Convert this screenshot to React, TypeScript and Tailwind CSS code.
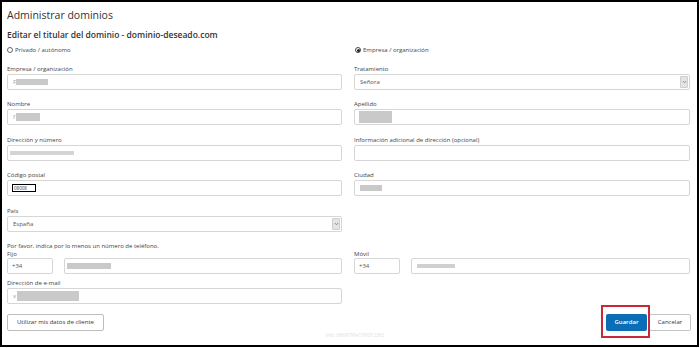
import React from "react";

function Label({ children }: { children?: React.ReactNode }) {
  return <div className="h-[8px] leading-[8px] text-[6px] text-[#444] whitespace-nowrap">{children}</div>;
}

function Box({ children, className = "" }: { children?: React.ReactNode; className?: string }) {
  return (
    <div className={"h-[16px] border border-[#d6d6d6] rounded-[2px] bg-white flex items-center px-[5px] text-[6px] text-[#555] " + className}>
      {children}
    </div>
  );
}

function Redact({ className = "" }: { className?: string }) {
  return <div className={"bg-[#c9c9c9] " + className} />;
}

function SelectBox({ value }: { value: string }) {
  return (
    <div className="h-[16px] border border-[#d6d6d6] rounded-[2px] bg-white flex items-stretch text-[6px] text-[#555]">
      <div className="flex-1 flex items-center pl-[5px]">{value}</div>
      <div className="w-[8px] my-[1px] mr-[1px] bg-[#e4e4e4] border border-[#cfcfcf] rounded-[1px] flex items-center justify-center">
        <svg width="5" height="4" viewBox="0 0 5 4">
          <path d="M0.8 1 L2.5 2.8 L4.2 1" stroke="#777" strokeWidth="0.8" fill="none" />
        </svg>
      </div>
    </div>
  );
}

export default function App() {
  return (
    <div className="w-[699px] h-[347px] border-2 border-black bg-white pl-[5px] pr-[6px] relative font-['Open_Sans',sans-serif]">
      <div className="mt-[6px] h-[14px] leading-[14px] text-[10.5px] text-[#333]">Administrar dominios</div>
      <div className="mt-[7px] h-[12px] leading-[12px] text-[8.5px] font-semibold text-[#333]">
        Editar el titular del dominio - dominio-deseado.com
      </div>

      <div className="grid grid-cols-[335px_336px] gap-x-[12px]">
        {/* radio row */}
        <div className="mt-[4px] h-[10px] flex items-center gap-[2px] text-[6px] text-[#444]">
          <span className="w-[6px] h-[6px] rounded-full border border-[#666] bg-white" />
          <span>Privado / autónomo</span>
        </div>
        <div className="mt-[4px] h-[10px] flex items-center gap-[2px] text-[6px] text-[#444] pl-[1px]">
          <span className="w-[6px] h-[6px] rounded-full border border-[#444] bg-white flex items-center justify-center">
            <span className="w-[3px] h-[3px] rounded-full bg-[#222]" />
          </span>
          <span>Empresa / organización</span>
        </div>

        {/* row 1 */}
        <div className="mt-[10px]">
          <Label>Empresa / organización</Label>
          <div className="mt-[1px]">
            <Box>
              <span className="text-[#999]">F</span>
              <Redact className="w-[32px] h-[6px]" />
            </Box>
          </div>
        </div>
        <div className="mt-[10px]">
          <Label>Tratamiento</Label>
          <div className="mt-[1px]">
            <SelectBox value="Señora" />
          </div>
        </div>

        {/* row 2 */}
        <div className="mt-[10px]">
          <Label>Nombre</Label>
          <div className="mt-[1px]">
            <Box>
              <span className="text-[#999]">f</span>
              <Redact className="w-[24px] h-[8px] ml-[1px]" />
            </Box>
          </div>
        </div>
        <div className="mt-[10px]">
          <Label>Apellido</Label>
          <div className="mt-[1px]">
            <Box className="pl-[4px]">
              <Redact className="w-[33px] h-[12px]" />
            </Box>
          </div>
        </div>

        {/* row 3 */}
        <div className="mt-[11px]">
          <Label>Dirección y número</Label>
          <div className="mt-[1px]">
            <Box className="pl-[2px]">
              <Redact className="w-[64px] h-[4px] bg-[#d4d4d4]" />
            </Box>
          </div>
        </div>
        <div className="mt-[11px]">
          <Label>Información adicional de dirección (opcional)</Label>
          <div className="mt-[1px]">
            <Box />
          </div>
        </div>

        {/* row 4 */}
        <div className="mt-[10px]">
          <Label>Código postal</Label>
          <div className="mt-[1px]">
            <Box className="pl-[4px]">
              <div className="w-[24px] h-[8px] border-[1.5px] border-black bg-white flex items-center px-[1px] text-[4.5px] leading-none text-[#333]">
                08008
              </div>
            </Box>
          </div>
        </div>
        <div className="mt-[10px]">
          <Label>Ciudad</Label>
          <div className="mt-[1px]">
            <Box>
              <Redact className="w-[22px] h-[6px]" />
            </Box>
          </div>
        </div>

        {/* row 5 */}
        <div className="mt-[11px]">
          <Label>País</Label>
          <div className="mt-[1px]">
            <SelectBox value="España" />
          </div>
        </div>
        <div className="mt-[11px]" />

        {/* phones */}
        <div className="mt-[10px]">
          <Label>Por favor, indica por lo menos un número de teléfono.</Label>
          <Label>Fijo</Label>
          <div className="flex gap-[11px]">
            <Box className="w-[46px] pl-[4px]">+34</Box>
            <Box className="flex-1 pl-[2px]">
              <Redact className="w-[44px] h-[6px]" />
            </Box>
          </div>
        </div>
        <div className="mt-[10px]">
          <div className="h-[8px]" />
          <Label>Móvil</Label>
          <div className="flex gap-[11px]">
            <Box className="w-[46px] pl-[4px]">+34</Box>
            <Box className="flex-1">
              <Redact className="w-[38px] h-[4px] bg-[#d0d0d0]" />
            </Box>
          </div>
        </div>

        {/* email */}
        <div className="mt-[5px]">
          <Label>Dirección de e-mail</Label>
          <div className="mt-[1px]">
            <Box>
              <span className="text-[#999]">v</span>
              <Redact className="w-[62px] h-[10px] ml-[1px]" />
            </Box>
          </div>
        </div>
        <div className="mt-[5px]" />
      </div>

      {/* buttons */}
      <div className="mt-[10px] flex items-start">
        <div className="h-[17px] px-[9px] border border-[#bdbdbd] rounded-[2px] flex items-center text-[6px] text-[#333]">
          Utilizar mis datos de cliente
        </div>
        <div className="flex-1 flex justify-center pt-[19px]">
          <span className="text-[4.5px] text-[#dedede] leading-none">Info: d968f796e1590312362</span>
        </div>
        <div className="relative mr-[2px]">
          <div className="h-[17px] w-[41px] bg-[#0b6db6] rounded-[2px] flex items-center justify-center text-[6px] font-semibold text-white">
            Guardar
          </div>
          <div className="absolute left-[-5px] right-[-3px] top-[-9px] bottom-[-7px] border-2 border-[#c8283a]" />
        </div>
        <div className="h-[17px] w-[42px] border border-[#c4c4c4] rounded-[2px] flex items-center justify-center text-[6px] text-[#333]">
          Cancelar
        </div>
      </div>
    </div>
  );
}
